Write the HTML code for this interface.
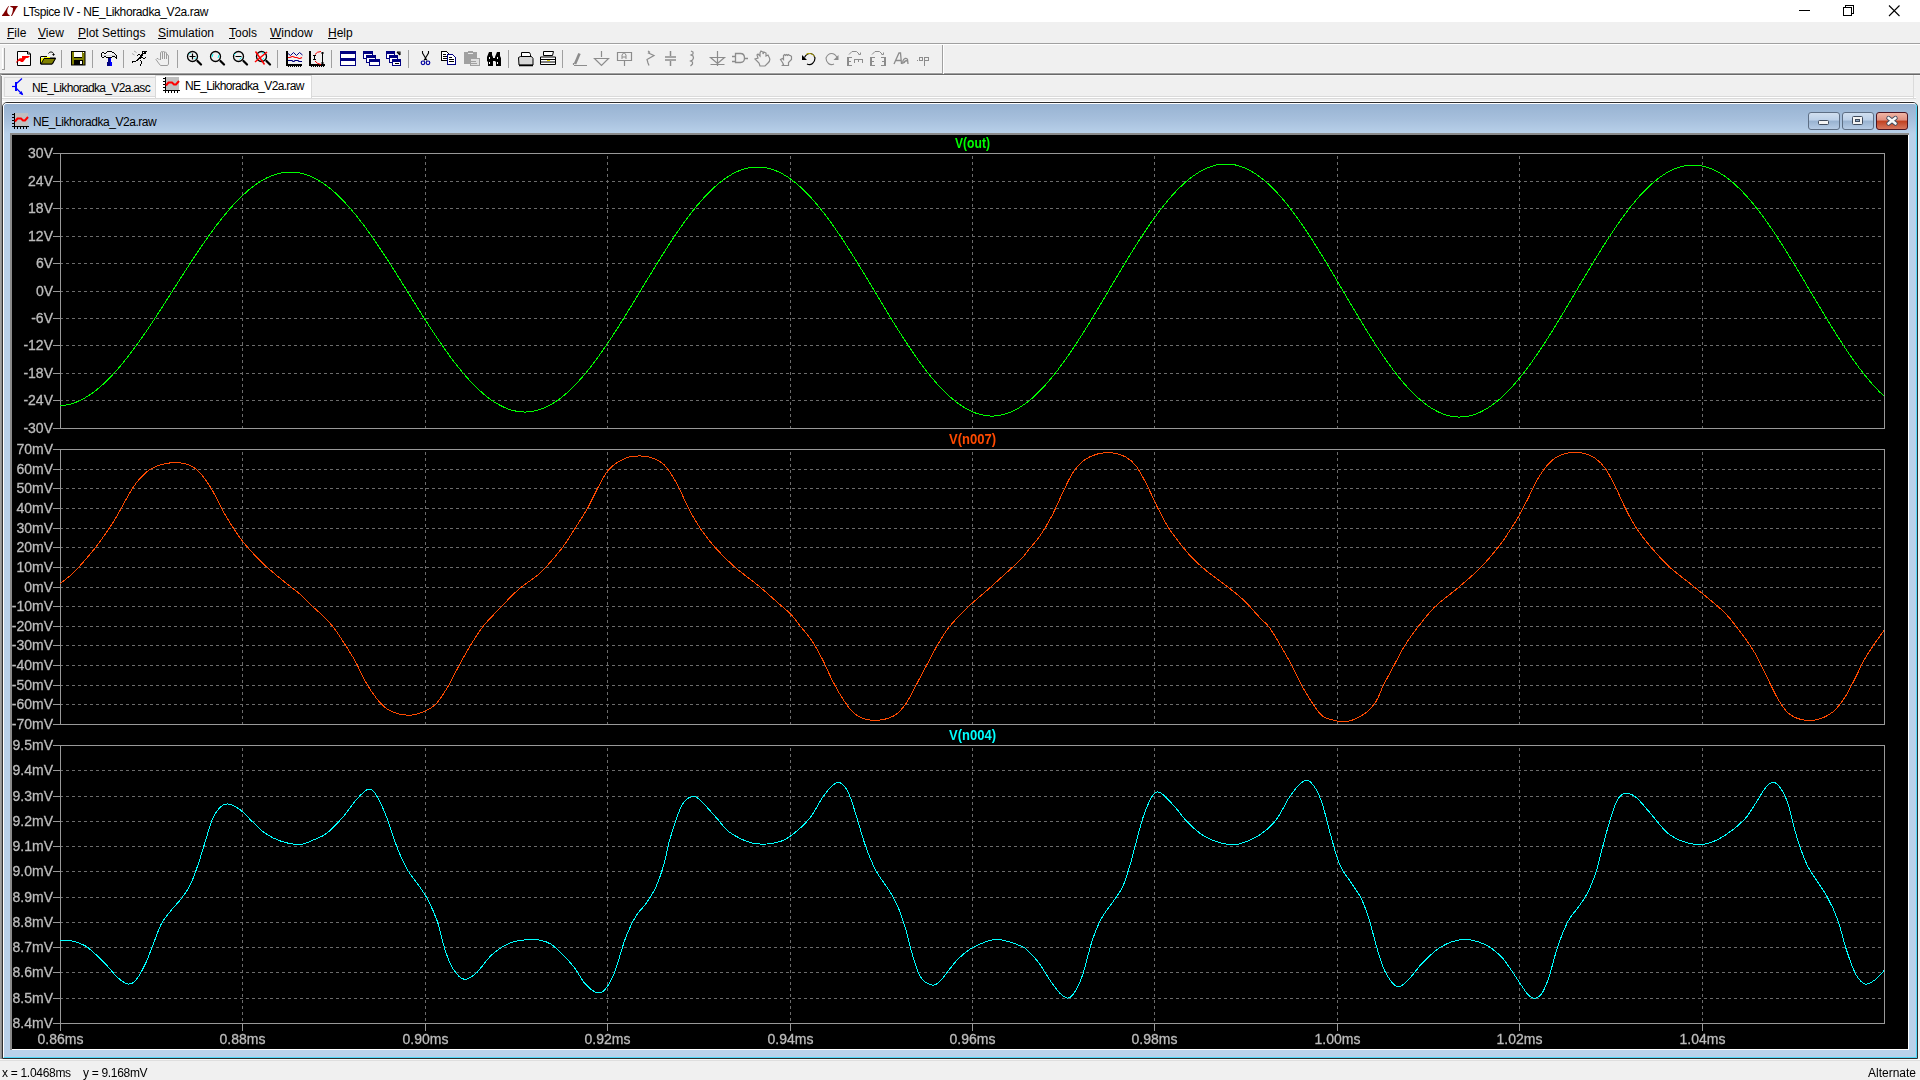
<!DOCTYPE html>
<html><head><meta charset="utf-8">
<style>
*{margin:0;padding:0;box-sizing:border-box}
html,body{width:1920px;height:1080px;overflow:hidden;background:#f0f0f0;font-family:"Liberation Sans",sans-serif;position:relative}
.abs{position:absolute}
.txt{position:absolute;white-space:nowrap;font-size:12px;color:#000;line-height:14px}
#menu u{text-decoration:underline;text-decoration-thickness:1px;text-underline-offset:1px}
</style></head>
<body>
<!-- title bar -->
<div class="abs" style="left:0;top:0;width:1920px;height:22px;background:#fff"></div>
<svg class="abs" style="left:0;top:0" width="24" height="22" viewBox="0 0 24 22">
  <path d="M8.5 6C7 7.5 4.5 12.5 2 15.3V16h7.8l-.4-1C8 14.5 7 13 7.2 11 7.4 9 8.3 7.3 9 6.5z" fill="#800000"/><path d="M10.3 6H18l-.6 1C16 8 14.5 12 12 16h-1c1-2 2-5 2-8-.5-.5-2.5-1-2.7-1.5z" fill="#800000"/>
</svg>
<div class="txt" style="left:23px;top:4.6px;letter-spacing:-0.38px">LTspice IV - NE_Likhoradka_V2a.raw</div>
<svg class="abs" style="left:1780px;top:0" width="140" height="22" viewBox="0 0 140 22" shape-rendering="crispEdges">
  <rect x="19" y="10" width="11" height="1" fill="#000"/>
  <rect x="63.5" y="7.5" width="8" height="8" fill="none" stroke="#000"/>
  <path d="M65.5 7.5v-2h8v8h-2" fill="none" stroke="#000"/>
  <path d="M109 5.5l10.5 10.5M119.5 5.5L109 16" stroke="#000" stroke-width="1.1" shape-rendering="auto"/>
</svg>
<!-- menu -->
<div id="menu">
  <div class="txt" style="left:7px;top:26px"><u>F</u>ile</div>
  <div class="txt" style="left:38px;top:26px"><u>V</u>iew</div>
  <div class="txt" style="left:78px;top:26px"><u>P</u>lot Settings</div>
  <div class="txt" style="left:158px;top:26px"><u>S</u>imulation</div>
  <div class="txt" style="left:229px;top:26px"><u>T</u>ools</div>
  <div class="txt" style="left:270px;top:26px"><u>W</u>indow</div>
  <div class="txt" style="left:328px;top:26px"><u>H</u>elp</div>
</div>
<div class="abs" style="left:0;top:43px;width:1920px;height:1px;background:#a0a0a0"></div>
<div class="abs" style="left:0;top:44px;width:1920px;height:1px;background:#fff"></div>
<div class="abs" style="left:0;top:72px;width:1920px;height:1px;background:#f6f6f6"></div><div class="abs" style="left:0;top:73px;width:1920px;height:1px;background:#a0a0a0"></div><div class="abs" style="left:0;top:74px;width:1920px;height:1px;background:#696969"></div>
<svg class="abs" style="left:0;top:0" width="960" height="80" viewBox="0 0 960 80">
<g shape-rendering="crispEdges">
<!-- toolbar band borders -->
<rect x="942" y="45" width="1" height="29" fill="#a0a0a0"/><rect x="943" y="45" width="1" height="29" fill="#fff"/>
<!-- grip -->
<rect x="2" y="48" width="1" height="21" fill="#fff"/><rect x="4" y="48" width="1" height="22" fill="#a0a0a0"/><rect x="2" y="69" width="3" height="1" fill="#a0a0a0"/>
<!-- separators -->
<g fill="#a0a0a0">
<rect x="61" y="50" width="1" height="18"/><rect x="92" y="50" width="1" height="18"/><rect x="123" y="50" width="1" height="18"/>
<rect x="177" y="50" width="1" height="18"/><rect x="277" y="50" width="1" height="18"/><rect x="331" y="50" width="1" height="18"/>
<rect x="408" y="50" width="1" height="18"/><rect x="508" y="50" width="1" height="18"/><rect x="562" y="50" width="1" height="18"/>
</g>
</g>
<!-- new doc -->
<path d="M18 52h11l1 2v11H18z" fill="#fff"/>
<path d="M17.5 51.5h10.5l2.5 2.5v11.5h-13z" fill="none" stroke="#000"/>
<path d="M27.5 51.5v2.5h3" fill="none" stroke="#000"/>
<path d="M22 56h8l-2 2h-2l-3 4h-3l1-1h-3l-2 2v-1l3-3h3l1-1h-1z" fill="#f00"/>
<path d="M18 61l2-2h2l1-1" stroke="#f00" stroke-width="1.5" fill="none"/>
<!-- open folder -->
<path d="M40.5 56.5v7.5h12l3-6H44" fill="none" stroke="#000"/>
<path d="M41 57h3v1h6v-1h-9z" fill="#ff0"/>
<path d="M41 56.5h6" stroke="#000"/>
<path d="M41 58h9l-1 1h-5l-3 4z" fill="#ff0"/>
<path d="M44 58.5h11.5l-3.5 5.5H41z" fill="#808000" stroke="#000"/>
<path d="M48.5 53.5c1-2 4-2 5 0v1.5" fill="none" stroke="#000"/>
<path d="M52 54h3l-1.5 2z" fill="#000"/>
<!-- floppy -->
<rect x="71.5" y="51.5" width="13.5" height="13.5" fill="#808000" stroke="#000"/>
<rect x="74" y="52" width="8" height="5" fill="#fff"/><rect x="74" y="57" width="8" height="1" fill="#000"/>
<rect x="74" y="60" width="9" height="5" fill="#000"/><rect x="80" y="61" width="2" height="3" fill="#fff"/>
<rect x="83" y="52" width="1" height="1" fill="#fff"/>
<!-- hammer -->
<g shape-rendering="crispEdges">
<path d="M102 53h2v1h2v-2h6v1h2v1h1v1h1v1h-4v1h-6v-1h-2v1h-2z" fill="#f4f4f4"/>
<rect x="102" y="55" width="14" height="1" fill="#d8d8d8"/>
<g fill="#000">
<rect x="107" y="51" width="5" height="1"/><rect x="102" y="52" width="2" height="1"/><rect x="106" y="52" width="1" height="1"/><rect x="112" y="52" width="2" height="1"/>
<rect x="101" y="53" width="1" height="4"/><rect x="104" y="53" width="2" height="1"/><rect x="114" y="53" width="1" height="1"/><rect x="115" y="54" width="1" height="1"/>
<rect x="116" y="55" width="1" height="4"/><rect x="104" y="56" width="2" height="1"/><rect x="112" y="56" width="3" height="1"/><rect x="115" y="57" width="1" height="1"/>
<rect x="102" y="57" width="2" height="1"/><rect x="106" y="57" width="6" height="1"/>
</g>
<rect x="108" y="58" width="2" height="4" fill="#000080"/><rect x="110" y="58" width="1" height="4" fill="#0000ff"/>
<rect x="107" y="62" width="3" height="4" fill="#000080"/><rect x="110" y="62" width="2" height="4" fill="#0000ff"/>
</g>
<!-- runner -->
<g shape-rendering="crispEdges" fill="#000">
<rect x="142" y="51" width="5" height="1"/><rect x="142" y="52" width="4" height="2"/><rect x="141" y="54" width="2" height="2"/><rect x="140" y="56" width="2" height="1"/>
<rect x="139" y="57" width="3" height="1"/><rect x="138" y="58" width="3" height="1"/><rect x="137" y="59" width="2" height="1"/><rect x="136" y="60" width="2" height="1"/><rect x="135" y="61" width="1" height="1"/>
<rect x="132" y="61" width="3" height="1"/><rect x="132" y="62" width="1" height="1"/>
<rect x="138" y="54" width="2" height="1"/><rect x="137" y="55" width="1" height="1"/><rect x="140" y="55" width="1" height="1"/>
<rect x="142" y="57" width="1" height="1"/><rect x="143" y="58" width="2" height="1"/><rect x="145" y="57" width="1" height="1"/>
<rect x="140" y="60" width="1" height="1"/><rect x="141" y="61" width="1" height="3"/><rect x="140" y="64" width="1" height="2"/>
</g>
<rect x="143" y="52" width="1" height="1" fill="#fff" shape-rendering="crispEdges"/>
<path d="M134 51l2.5 1.5M132 53.5l2.5 1.5" stroke="#a8a8a8"/>
<!-- hand gray -->
<path d="M160.5 60v-7l1-1.5 1 .5v6.5M162.5 59v-7l1-1 1 1v7M164.5 59v-6.5l1-.5 1 1v6M166.5 59v-5l1.5 1 .5 1v8l-1 1.5h-7l-2-2.5-2.5-3.5 1-1h1l1.5 1.5" fill="none" stroke="#9c9c9c"/>
<!-- zoom icons -->
<g fill="none" stroke="#000" stroke-width="1.3">
<circle cx="192.5" cy="56.5" r="5"/><circle cx="215.5" cy="56.5" r="5"/><circle cx="238.5" cy="56.5" r="5"/><circle cx="261.5" cy="56.5" r="5"/>
</g>
<g stroke="#000" stroke-width="2.2" stroke-linecap="round">
<path d="M197.5 61l3.5 3.5M220.5 61l3.5 3.5M243.5 61l3.5 3.5M266.5 61l3.5 3.5"/>
</g>
<path d="M189.5 56.5h6M192.5 53.5v6M235.5 56.5h6" stroke="#000" stroke-width="1.2"/>
<path d="M189 54.5l1.5-1.5M194.5 59l1.5-1.5M212 57l1-3M218 58l1-3M234 55l1.5-1.5M239.5 59.5l2-2M262 53l2 0M262 60l2-2" stroke="#00ffff"/>
<path d="M255.5 51.5l9 13M255 62l12-10" stroke="#f00" stroke-width="1.5"/>
<!-- plot icons -->
<g shape-rendering="crispEdges">
<path d="M287 51v14h15" fill="none" stroke="#000" stroke-width="1.5"/>
<path d="M286 53h1M286 55h1M286 57h1M286 59h1M286 61h1M286 63h1M288 66v1M290 66v1M292 66v1M294 66v1M296 66v1M298 66v1M300 66v1" stroke="#000"/>
<path d="M310 51v14h15" fill="none" stroke="#000" stroke-width="1.5"/>
<path d="M309 53h1M309 55h1M309 57h1M309 59h1M309 61h1M309 63h1M311 66v1M313 66v1M315 66v1M317 66v1M319 66v1M321 66v1M323 66v1" stroke="#000"/>
</g>
<path d="M288 53.5l2.5 2 3-3 3 3 3-3 3 2.5" fill="none" stroke="#000080"/>
<path d="M288 57.5h2l2-1h1l2 1h2l2 1h1l2-1" fill="none" stroke="#f00" stroke-width="1.2"/>
<path d="M288 60.5h4l1 1h1l1-1h3l1 1h3" fill="none" stroke="#000080" stroke-width="1.2"/>
<path d="M321 51.5q-4 0-6 3M315 61q2 3 6 3.5" fill="none" stroke="#f00"/>
<path d="M314.5 55v5M322.5 52v12" stroke="#000"/>
<path d="M313 55.5h3M313 59.5h3M321 53h3M321 63h3" stroke="#000"/>
<!-- tile/cascade/arrange -->
<g shape-rendering="crispEdges">
<rect x="340.5" y="51.5" width="15" height="7" fill="#fff" stroke="#000080"/><rect x="341" y="52" width="14" height="2" fill="#000080"/>
<rect x="340.5" y="58.5" width="15" height="7" fill="#fff" stroke="#000080"/><rect x="341" y="59" width="14" height="2" fill="#000080"/>
<rect x="363.5" y="51.5" width="9" height="7" fill="#fff" stroke="#000080"/><rect x="364" y="52" width="8" height="2" fill="#000080"/>
<rect x="366.5" y="55.5" width="9" height="7" fill="#fff" stroke="#000080"/><rect x="367" y="56" width="8" height="2" fill="#000080"/>
<rect x="369.5" y="59.5" width="10" height="6" fill="#fff" stroke="#000080"/><rect x="370" y="60" width="9" height="2" fill="#000080"/>
<rect x="386.5" y="51.5" width="8" height="7" fill="#fff" stroke="#000080"/><rect x="387" y="52" width="7" height="2" fill="#000080"/>
<rect x="389.5" y="55.5" width="8" height="7" fill="#fff" stroke="#000080"/><rect x="390" y="56" width="7" height="2" fill="#000080"/>
<rect x="392.5" y="59.5" width="8" height="6" fill="#fff" stroke="#000080"/><rect x="393" y="60" width="7" height="2" fill="#000080"/>
<rect x="395" y="63" width="4" height="1" fill="#000"/>
</g>
<path d="M397 52h3v3M397 52l3 3" fill="none" stroke="#000" stroke-width="1.1"/>
<!-- scissors -->
<path d="M422.5 51v2l3 5M428.5 51v2l-3 5M425.5 58l-1.5 2.5M425.5 58l1.5 2.5" fill="none" stroke="#000" stroke-width="1.1"/>
<circle cx="423" cy="62.8" r="1.8" fill="none" stroke="#0000a0" stroke-width="1.2"/><circle cx="428" cy="62.8" r="1.8" fill="none" stroke="#0000a0" stroke-width="1.2"/>
<!-- copy -->
<g shape-rendering="crispEdges">
<path d="M441.5 51.5h5l2 2v6.5h-7z" fill="#fff" stroke="#000"/>
<path d="M443 54h3M443 56h4M443 58h4" stroke="#000"/>
<path d="M447.5 54.5h5l3 3v6.5h-8z" fill="#fff" stroke="#000080"/>
<path d="M449 57h3M449 59h5M449 61h5" stroke="#000"/>
<!-- paste gray -->
<rect x="464" y="52" width="13" height="12" rx="1" fill="#a0a0a0"/>
<rect x="468" y="51" width="5" height="2" fill="#a0a0a0"/><rect x="468" y="53" width="5" height="1" fill="#e8e8e8"/>
<rect x="470" y="58" width="9" height="7" fill="#e0e0e0" stroke="#a0a0a0"/>
<path d="M471 61h5M471 63h6" stroke="#a0a0a0"/>
</g>
<!-- binoculars -->
<path d="M489 52h3v3l1 2v9h-5v-4l-1-1v-4zM497 52h3v4l1 2v8h-5v-4l-1-1v-4z" fill="#000"/>
<path d="M492 58h5v3h-5z" fill="#000"/>
<path d="M489 57h1v2h-1zM497 57h1v2h-1zM489 62h1v2h-1zM497 62h1v2h-1z" fill="#fff"/>
<!-- printers -->
<path d="M521.5 52.5h8l1 2v2h-9z" fill="#fff" stroke="#000"/>
<path d="M518.5 57.5l2-1h11l1.5 2v6.5h-14z" fill="#d8d8d8" stroke="#000"/>
<path d="M519 65.5h14" stroke="#000" stroke-width="1.5"/>
<path d="M543.5 51.5h10l-1 4h-9z" fill="#fff" stroke="#000"/>
<path d="M540.5 57h15v7.5h-15z" fill="#fff" stroke="#000"/>
<path d="M541 59.5h14M541 62h14" stroke="#000"/>
<path d="M547 60.5h3" stroke="#e0d000"/>
<!-- gray schematic icons -->
<g fill="none" stroke="#8c8c8c" stroke-width="1.2">
<path d="M575 64l4.5-10.5" stroke-width="2.6"/><path d="M574 65.5h13" stroke-width="1"/><path d="M573.5 65v-2"/>
<path d="M601.5 51v6M594.5 58.5h14l-7 7z"/>
<path d="M617.5 52.5h14v8h-14zM624.5 61v5"/><path d="M622 59v-4l1.5-2h1l1.5 2v4M622 57h4" stroke-width="1"/>
<path d="M648 51l1.5 1-1 1 5.5 2.5-7 4 1 3.5 1 2.5"/>
<path d="M670.5 51v5M665 57h11M665 60h11M670.5 61v5" stroke-width="1.5"/>
<path d="M691 51l2 1v2l-2 1 2 1 .5 2-1 2-2 1 2 1v2l-2 2"/>
<path d="M717.5 51v15M710.5 57.5h14l-7 6zM710.5 64.5h14"/>
<path d="M732 56.5h3M732 61.5h3M735.5 53.5h5q4 0 4 4.5t-4 4.5h-5zM745 58.5h3" stroke-width="1.3"/>
<path d="M760 66h5l3-3q3-3 1-6l-1-2-2 1v-3l-2-1-1 2v-2l-2-1-1 2v3l-2-2-1 1 1 3-3 1 4 4z"/>
<path d="M782.5 65.5h6v-3l3-3v-3l-1-1h-1l-1-1-1 1-1-1-1 1-1-1-1 1v4l-1-1-2 1 2 3 1 2z"/>
</g>
<path d="M804.5 57.5q2-4 5.5-4t5 4.5q0 3.5-2.5 5.5t-5.5 .5" fill="none" stroke="#000" stroke-width="1.2"/>
<path d="M806 54.5q2-1.5 4.5-1t4 3" fill="none" stroke="#b8a800" stroke-width="1"/>
<path d="M802 55v5h5z" fill="#000"/>
<g fill="none" stroke="#8c8c8c" stroke-width="1.1">
<path d="M837 57.5q-2-4-5.5-4t-5.5 4.5q0 3.5 2.5 5.5t5.5 .5"/>
</g>
<path d="M838.5 55v5h-5z" fill="#8c8c8c"/>
<g shape-rendering="crispEdges" fill="#8c8c8c">
<rect x="847" y="57" width="2" height="9"/><rect x="847" y="57" width="5" height="1"/><rect x="847" y="61" width="4" height="1"/><rect x="847" y="65" width="5" height="1"/>
<rect x="854" y="59" width="9" height="1"/><rect x="854" y="59" width="1" height="4"/><rect x="858" y="59" width="1" height="3"/><rect x="862" y="59" width="1" height="4"/>
<rect x="870" y="57" width="2" height="9"/><rect x="870" y="57" width="5" height="1"/><rect x="870" y="61" width="4" height="1"/><rect x="870" y="65" width="5" height="1"/>
<rect x="884" y="57" width="2" height="9"/><rect x="881" y="57" width="5" height="1"/><rect x="882" y="61" width="4" height="1"/><rect x="881" y="65" width="5" height="1"/>
</g>
<g fill="none" stroke="#8c8c8c" stroke-width="1">
<path d="M849 54.5l3-3h4.5l3.5 3.5M858.5 54.5h2v-2"/>
<path d="M872 54.5l3-3h4.5l3.5 3.5M881.5 54.5h2v-2"/>
</g>
<path d="M894 64l5-11h1.5l1 11M896 60.5h5M903 64q-1-4 2-5.5 2-.5 2.5 1l.5 4.5M907.5 60.5q-3 0-3.5 2.5" fill="none" stroke="#8c8c8c" stroke-width="1.3"/>
<g fill="#8c8c8c">
<rect x="917" y="60" width="1" height="1"/>
<path d="M919 57h4v4h-4zM920 58v2h2v-2z" fill-rule="evenodd"/>
<path d="M924 57h5v4h-4v5h-1zM925 58v2h3v-2z" fill-rule="evenodd"/>
</g>
</svg>

<!-- MDI client edge -->
<div class="abs" style="left:0;top:73px;width:1px;height:987px;background:#a0a0a0"></div>
<div class="abs" style="left:1px;top:74px;width:1px;height:985px;background:#8c8c8c"></div>
<div class="abs" style="left:2px;top:75px;width:1px;height:30px;background:#f8f8f8"></div>
<div class="abs" style="left:1px;top:75px;width:1919px;height:1px;background:#f8f8f8"></div>
<!-- tabs -->
<div class="abs" style="left:4px;top:77px;width:152px;height:20px;background:#f0f0f0;border:1px solid #dadada;border-right:none"></div>
<div class="abs" style="left:312px;top:96px;width:1602px;height:1px;background:#dadada"></div><div class="abs" style="left:2px;top:97px;width:1914px;height:1px;background:#fff"></div><div class="abs" style="left:2px;top:98px;width:1914px;height:1px;background:#dadada"></div><div class="abs" style="left:2px;top:101px;width:1914px;height:1px;background:#fff"></div>
<div class="abs" style="left:1913px;top:75px;width:1px;height:23px;background:#dadada"></div>
<div class="abs" style="left:155px;top:75px;width:157px;height:23px;background:#fff;border:1px solid #d9d9d9;border-bottom:none"></div>
<svg class="abs" style="left:10px;top:76px" width="20" height="22" viewBox="10 76 20 22">
  <rect x="15" y="82" width="2" height="9" fill="#0000ff"/>
  <path d="M12 86.5h3" stroke="#0000ff" stroke-width="1.2"/>
  <path d="M16.5 83.5l5.5-5M16.5 88.5l6 6" stroke="#0000ff" stroke-width="1.2" fill="none"/>
  <path d="M23.2 95.2l-4.2-1.6 2.6-2.6z" fill="#0000ff"/>
</svg>
<div class="txt" style="left:32px;top:81px;letter-spacing:-0.67px">NE_Likhoradka_V2a.asc</div>
<svg class="abs" style="left:161px;top:74px" width="22" height="22" viewBox="10 110 22 22" shape-rendering="crispEdges">
  <rect x="15" y="113" width="13" height="13" fill="#c0c0c0"/>
  <rect x="14" y="113" width="1" height="16" fill="#000"/><rect x="12" y="126" width="17" height="1" fill="#000"/>
  <path d="M12 114.5h2M12 117.5h2M12 120.5h2M12 123.5h2M14.5 127v2M17.5 127v2M20.5 127v2M23.5 127v2M26.5 127v2" stroke="#000"/>
  <path d="M15 121.5l2.5-3h3.5l2 2h2l3-3.5" fill="none" stroke="#f00" stroke-width="2" shape-rendering="auto"/>
</svg>
<div class="txt" style="left:185px;top:79px;letter-spacing:-0.67px">NE_Likhoradka_V2a.raw</div>
<!-- child window -->
<div class="abs" style="left:2px;top:102px;width:1916px;height:957px;background:#b9d1ea;border:1px solid #2e2e2e;border-radius:5px 5px 0 0"></div>
<div class="abs" style="left:3px;top:103px;width:1914px;height:955px;border-left:1px solid #fff;border-top:1px solid #fff;border-right:1px solid #4fd8f8;border-bottom:1px solid #4fd8f8;border-radius:4px 4px 0 0"></div>
<div class="abs" style="left:4px;top:104px;width:1912px;height:30px;background:linear-gradient(#98b3d2,#a6bfdc 50%,#b9d1ea);border-radius:3px 3px 0 0"></div>
<div class="abs" style="left:10px;top:133px;width:1899px;height:917px;background:#fff;border-top:2px solid #8a8a8a;border-left:2px solid #8a8a8a"></div>
<svg class="abs" style="left:10px;top:110px" width="22" height="22" viewBox="10 110 22 22" shape-rendering="crispEdges">
  <rect x="15" y="113" width="13" height="13" fill="#c0c0c0"/>
  <rect x="14" y="113" width="1" height="16" fill="#000"/><rect x="12" y="126" width="17" height="1" fill="#000"/>
  <path d="M12 114.5h2M12 117.5h2M12 120.5h2M12 123.5h2M14.5 127v2M17.5 127v2M20.5 127v2M23.5 127v2M26.5 127v2" stroke="#000"/>
  <path d="M15 121.5l2.5-3h3.5l2 2h2l3-3.5" fill="none" stroke="#f00" stroke-width="2" shape-rendering="auto"/>
</svg>
<div class="txt" style="left:33px;top:115px;letter-spacing:-0.45px">NE_Likhoradka_V2a.raw</div>
<svg class="abs" style="left:1800px;top:104px" width="116" height="30" viewBox="1800 104 116 30">
  <defs>
    <linearGradient id="gb" x1="0" y1="0" x2="0" y2="1">
      <stop offset="0" stop-color="#d2e0f0"/><stop offset="0.45" stop-color="#bcd0e8"/><stop offset="0.5" stop-color="#98b2d0"/><stop offset="1" stop-color="#b8cde6"/>
    </linearGradient>
    <linearGradient id="gr" x1="0" y1="0" x2="0" y2="1">
      <stop offset="0" stop-color="#f0b8a8"/><stop offset="0.45" stop-color="#e09080"/><stop offset="0.5" stop-color="#c0401f"/><stop offset="1" stop-color="#d87a62"/>
    </linearGradient>
  </defs>
  <rect x="1808.5" y="112.5" width="31" height="17" rx="2.5" fill="url(#gb)" stroke="#5d6e84"/>
  <rect x="1842.5" y="112.5" width="31" height="17" rx="2.5" fill="url(#gb)" stroke="#5d6e84"/>
  <rect x="1876.5" y="112.5" width="31" height="17" rx="2.5" fill="url(#gr)" stroke="#4a1420"/>
  <rect x="1818.5" y="120.5" width="10" height="4" rx="1" fill="#f4f4f4" stroke="#3e4a5c"/>
  <rect x="1852.5" y="116.5" width="10" height="8" rx="1" fill="#f4f4f4" stroke="#3e4a5c"/>
  <rect x="1855.5" y="119.5" width="4" height="2" fill="#8fa6c0" stroke="#3e4a5c"/>
  <path d="M1888.5 118l7 5.5M1895.5 118l-7 5.5" stroke="#3e4a5c" stroke-width="4.4" stroke-linecap="round"/>
  <path d="M1888.5 118l7 5.5M1895.5 118l-7 5.5" stroke="#f8f8f8" stroke-width="2.6" stroke-linecap="round"/>
</svg>
<svg class="abs" style="left:0;top:0;will-change:transform" width="1920" height="1080" viewBox="0 0 1920 1080">
<rect x="12" y="135" width="1896" height="914" fill="#000"/>
<g shape-rendering="crispEdges"><line x1="60" y1="181.5" x2="1884" y2="181.5" stroke="#6c6c6c" stroke-dasharray="3 3"/><line x1="60" y1="208.5" x2="1884" y2="208.5" stroke="#6c6c6c" stroke-dasharray="3 3"/><line x1="60" y1="236.5" x2="1884" y2="236.5" stroke="#6c6c6c" stroke-dasharray="3 3"/><line x1="60" y1="263.5" x2="1884" y2="263.5" stroke="#6c6c6c" stroke-dasharray="3 3"/><line x1="60" y1="291.5" x2="1884" y2="291.5" stroke="#6c6c6c" stroke-dasharray="3 3"/><line x1="60" y1="318.5" x2="1884" y2="318.5" stroke="#6c6c6c" stroke-dasharray="3 3"/><line x1="60" y1="345.5" x2="1884" y2="345.5" stroke="#6c6c6c" stroke-dasharray="3 3"/><line x1="60" y1="373.5" x2="1884" y2="373.5" stroke="#6c6c6c" stroke-dasharray="3 3"/><line x1="60" y1="400.5" x2="1884" y2="400.5" stroke="#6c6c6c" stroke-dasharray="3 3"/><line x1="242.5" y1="156" x2="242.5" y2="428" stroke="#6c6c6c" stroke-dasharray="3 3"/><line x1="425.5" y1="156" x2="425.5" y2="428" stroke="#6c6c6c" stroke-dasharray="3 3"/><line x1="607.5" y1="156" x2="607.5" y2="428" stroke="#6c6c6c" stroke-dasharray="3 3"/><line x1="790.5" y1="156" x2="790.5" y2="428" stroke="#6c6c6c" stroke-dasharray="3 3"/><line x1="972.5" y1="156" x2="972.5" y2="428" stroke="#6c6c6c" stroke-dasharray="3 3"/><line x1="1154.5" y1="156" x2="1154.5" y2="428" stroke="#6c6c6c" stroke-dasharray="3 3"/><line x1="1337.5" y1="156" x2="1337.5" y2="428" stroke="#6c6c6c" stroke-dasharray="3 3"/><line x1="1519.5" y1="156" x2="1519.5" y2="428" stroke="#6c6c6c" stroke-dasharray="3 3"/><line x1="1702.5" y1="156" x2="1702.5" y2="428" stroke="#6c6c6c" stroke-dasharray="3 3"/><rect x="60.5" y="153.5" width="1824" height="275" fill="none" stroke="#999999"/><line x1="53" y1="153.5" x2="60" y2="153.5" stroke="#999999"/><line x1="53" y1="181.5" x2="60" y2="181.5" stroke="#999999"/><line x1="53" y1="208.5" x2="60" y2="208.5" stroke="#999999"/><line x1="53" y1="236.5" x2="60" y2="236.5" stroke="#999999"/><line x1="53" y1="263.5" x2="60" y2="263.5" stroke="#999999"/><line x1="53" y1="291.5" x2="60" y2="291.5" stroke="#999999"/><line x1="53" y1="318.5" x2="60" y2="318.5" stroke="#999999"/><line x1="53" y1="345.5" x2="60" y2="345.5" stroke="#999999"/><line x1="53" y1="373.5" x2="60" y2="373.5" stroke="#999999"/><line x1="53" y1="400.5" x2="60" y2="400.5" stroke="#999999"/><line x1="53" y1="428.5" x2="60" y2="428.5" stroke="#999999"/><line x1="60" y1="469.5" x2="1884" y2="469.5" stroke="#6c6c6c" stroke-dasharray="3 3"/><line x1="60" y1="488.5" x2="1884" y2="488.5" stroke="#6c6c6c" stroke-dasharray="3 3"/><line x1="60" y1="508.5" x2="1884" y2="508.5" stroke="#6c6c6c" stroke-dasharray="3 3"/><line x1="60" y1="528.5" x2="1884" y2="528.5" stroke="#6c6c6c" stroke-dasharray="3 3"/><line x1="60" y1="547.5" x2="1884" y2="547.5" stroke="#6c6c6c" stroke-dasharray="3 3"/><line x1="60" y1="567.5" x2="1884" y2="567.5" stroke="#6c6c6c" stroke-dasharray="3 3"/><line x1="60" y1="587.5" x2="1884" y2="587.5" stroke="#6c6c6c" stroke-dasharray="3 3"/><line x1="60" y1="606.5" x2="1884" y2="606.5" stroke="#6c6c6c" stroke-dasharray="3 3"/><line x1="60" y1="626.5" x2="1884" y2="626.5" stroke="#6c6c6c" stroke-dasharray="3 3"/><line x1="60" y1="645.5" x2="1884" y2="645.5" stroke="#6c6c6c" stroke-dasharray="3 3"/><line x1="60" y1="665.5" x2="1884" y2="665.5" stroke="#6c6c6c" stroke-dasharray="3 3"/><line x1="60" y1="685.5" x2="1884" y2="685.5" stroke="#6c6c6c" stroke-dasharray="3 3"/><line x1="60" y1="704.5" x2="1884" y2="704.5" stroke="#6c6c6c" stroke-dasharray="3 3"/><line x1="242.5" y1="452" x2="242.5" y2="724" stroke="#6c6c6c" stroke-dasharray="3 3"/><line x1="425.5" y1="452" x2="425.5" y2="724" stroke="#6c6c6c" stroke-dasharray="3 3"/><line x1="607.5" y1="452" x2="607.5" y2="724" stroke="#6c6c6c" stroke-dasharray="3 3"/><line x1="790.5" y1="452" x2="790.5" y2="724" stroke="#6c6c6c" stroke-dasharray="3 3"/><line x1="972.5" y1="452" x2="972.5" y2="724" stroke="#6c6c6c" stroke-dasharray="3 3"/><line x1="1154.5" y1="452" x2="1154.5" y2="724" stroke="#6c6c6c" stroke-dasharray="3 3"/><line x1="1337.5" y1="452" x2="1337.5" y2="724" stroke="#6c6c6c" stroke-dasharray="3 3"/><line x1="1519.5" y1="452" x2="1519.5" y2="724" stroke="#6c6c6c" stroke-dasharray="3 3"/><line x1="1702.5" y1="452" x2="1702.5" y2="724" stroke="#6c6c6c" stroke-dasharray="3 3"/><rect x="60.5" y="449.5" width="1824" height="275" fill="none" stroke="#999999"/><line x1="53" y1="449.5" x2="60" y2="449.5" stroke="#999999"/><line x1="53" y1="469.5" x2="60" y2="469.5" stroke="#999999"/><line x1="53" y1="488.5" x2="60" y2="488.5" stroke="#999999"/><line x1="53" y1="508.5" x2="60" y2="508.5" stroke="#999999"/><line x1="53" y1="528.5" x2="60" y2="528.5" stroke="#999999"/><line x1="53" y1="547.5" x2="60" y2="547.5" stroke="#999999"/><line x1="53" y1="567.5" x2="60" y2="567.5" stroke="#999999"/><line x1="53" y1="587.5" x2="60" y2="587.5" stroke="#999999"/><line x1="53" y1="606.5" x2="60" y2="606.5" stroke="#999999"/><line x1="53" y1="626.5" x2="60" y2="626.5" stroke="#999999"/><line x1="53" y1="645.5" x2="60" y2="645.5" stroke="#999999"/><line x1="53" y1="665.5" x2="60" y2="665.5" stroke="#999999"/><line x1="53" y1="685.5" x2="60" y2="685.5" stroke="#999999"/><line x1="53" y1="704.5" x2="60" y2="704.5" stroke="#999999"/><line x1="53" y1="724.5" x2="60" y2="724.5" stroke="#999999"/><line x1="60" y1="770.5" x2="1884" y2="770.5" stroke="#6c6c6c" stroke-dasharray="3 3"/><line x1="60" y1="796.5" x2="1884" y2="796.5" stroke="#6c6c6c" stroke-dasharray="3 3"/><line x1="60" y1="821.5" x2="1884" y2="821.5" stroke="#6c6c6c" stroke-dasharray="3 3"/><line x1="60" y1="846.5" x2="1884" y2="846.5" stroke="#6c6c6c" stroke-dasharray="3 3"/><line x1="60" y1="871.5" x2="1884" y2="871.5" stroke="#6c6c6c" stroke-dasharray="3 3"/><line x1="60" y1="897.5" x2="1884" y2="897.5" stroke="#6c6c6c" stroke-dasharray="3 3"/><line x1="60" y1="922.5" x2="1884" y2="922.5" stroke="#6c6c6c" stroke-dasharray="3 3"/><line x1="60" y1="947.5" x2="1884" y2="947.5" stroke="#6c6c6c" stroke-dasharray="3 3"/><line x1="60" y1="972.5" x2="1884" y2="972.5" stroke="#6c6c6c" stroke-dasharray="3 3"/><line x1="60" y1="998.5" x2="1884" y2="998.5" stroke="#6c6c6c" stroke-dasharray="3 3"/><line x1="242.5" y1="748" x2="242.5" y2="1023" stroke="#6c6c6c" stroke-dasharray="3 3"/><line x1="425.5" y1="748" x2="425.5" y2="1023" stroke="#6c6c6c" stroke-dasharray="3 3"/><line x1="607.5" y1="748" x2="607.5" y2="1023" stroke="#6c6c6c" stroke-dasharray="3 3"/><line x1="790.5" y1="748" x2="790.5" y2="1023" stroke="#6c6c6c" stroke-dasharray="3 3"/><line x1="972.5" y1="748" x2="972.5" y2="1023" stroke="#6c6c6c" stroke-dasharray="3 3"/><line x1="1154.5" y1="748" x2="1154.5" y2="1023" stroke="#6c6c6c" stroke-dasharray="3 3"/><line x1="1337.5" y1="748" x2="1337.5" y2="1023" stroke="#6c6c6c" stroke-dasharray="3 3"/><line x1="1519.5" y1="748" x2="1519.5" y2="1023" stroke="#6c6c6c" stroke-dasharray="3 3"/><line x1="1702.5" y1="748" x2="1702.5" y2="1023" stroke="#6c6c6c" stroke-dasharray="3 3"/><rect x="60.5" y="745.5" width="1824" height="278" fill="none" stroke="#999999"/><line x1="53" y1="745.5" x2="60" y2="745.5" stroke="#999999"/><line x1="53" y1="770.5" x2="60" y2="770.5" stroke="#999999"/><line x1="53" y1="796.5" x2="60" y2="796.5" stroke="#999999"/><line x1="53" y1="821.5" x2="60" y2="821.5" stroke="#999999"/><line x1="53" y1="846.5" x2="60" y2="846.5" stroke="#999999"/><line x1="53" y1="871.5" x2="60" y2="871.5" stroke="#999999"/><line x1="53" y1="897.5" x2="60" y2="897.5" stroke="#999999"/><line x1="53" y1="922.5" x2="60" y2="922.5" stroke="#999999"/><line x1="53" y1="947.5" x2="60" y2="947.5" stroke="#999999"/><line x1="53" y1="972.5" x2="60" y2="972.5" stroke="#999999"/><line x1="53" y1="998.5" x2="60" y2="998.5" stroke="#999999"/><line x1="53" y1="1023.5" x2="60" y2="1023.5" stroke="#999999"/></g>
<g shape-rendering="crispEdges"><line x1="60.5" y1="1023" x2="60.5" y2="1031" stroke="#999999"/><line x1="242.5" y1="1023" x2="242.5" y2="1031" stroke="#999999"/><line x1="425.5" y1="1023" x2="425.5" y2="1031" stroke="#999999"/><line x1="607.5" y1="1023" x2="607.5" y2="1031" stroke="#999999"/><line x1="790.5" y1="1023" x2="790.5" y2="1031" stroke="#999999"/><line x1="972.5" y1="1023" x2="972.5" y2="1031" stroke="#999999"/><line x1="1154.5" y1="1023" x2="1154.5" y2="1031" stroke="#999999"/><line x1="1337.5" y1="1023" x2="1337.5" y2="1031" stroke="#999999"/><line x1="1519.5" y1="1023" x2="1519.5" y2="1031" stroke="#999999"/><line x1="1702.5" y1="1023" x2="1702.5" y2="1031" stroke="#999999"/></g>
<g font-family="Liberation Sans" font-size="14" fill="#bcbcbc" stroke="#bcbcbc" stroke-width="0.3"><text x="53" y="157.6" text-anchor="end">30V</text><text x="53" y="185.6" text-anchor="end">24V</text><text x="53" y="212.6" text-anchor="end">18V</text><text x="53" y="240.6" text-anchor="end">12V</text><text x="53" y="267.6" text-anchor="end">6V</text><text x="53" y="295.6" text-anchor="end">0V</text><text x="53" y="322.6" text-anchor="end">-6V</text><text x="53" y="349.6" text-anchor="end">-12V</text><text x="53" y="377.6" text-anchor="end">-18V</text><text x="53" y="404.6" text-anchor="end">-24V</text><text x="53" y="432.6" text-anchor="end">-30V</text><text x="53" y="453.6" text-anchor="end">70mV</text><text x="53" y="473.6" text-anchor="end">60mV</text><text x="53" y="492.6" text-anchor="end">50mV</text><text x="53" y="512.6" text-anchor="end">40mV</text><text x="53" y="532.6" text-anchor="end">30mV</text><text x="53" y="551.6" text-anchor="end">20mV</text><text x="53" y="571.6" text-anchor="end">10mV</text><text x="53" y="591.6" text-anchor="end">0mV</text><text x="53" y="610.6" text-anchor="end">-10mV</text><text x="53" y="630.6" text-anchor="end">-20mV</text><text x="53" y="649.6" text-anchor="end">-30mV</text><text x="53" y="669.6" text-anchor="end">-40mV</text><text x="53" y="689.6" text-anchor="end">-50mV</text><text x="53" y="708.6" text-anchor="end">-60mV</text><text x="53" y="728.6" text-anchor="end">-70mV</text><text x="53" y="749.6" text-anchor="end">9.5mV</text><text x="53" y="774.6" text-anchor="end">9.4mV</text><text x="53" y="800.6" text-anchor="end">9.3mV</text><text x="53" y="825.6" text-anchor="end">9.2mV</text><text x="53" y="850.6" text-anchor="end">9.1mV</text><text x="53" y="875.6" text-anchor="end">9.0mV</text><text x="53" y="901.6" text-anchor="end">8.9mV</text><text x="53" y="926.6" text-anchor="end">8.8mV</text><text x="53" y="951.6" text-anchor="end">8.7mV</text><text x="53" y="976.6" text-anchor="end">8.6mV</text><text x="53" y="1002.6" text-anchor="end">8.5mV</text><text x="53" y="1027.6" text-anchor="end">8.4mV</text><text x="60.5" y="1043.6" text-anchor="middle">0.86ms</text><text x="242.5" y="1043.6" text-anchor="middle">0.88ms</text><text x="425.5" y="1043.6" text-anchor="middle">0.90ms</text><text x="607.5" y="1043.6" text-anchor="middle">0.92ms</text><text x="790.5" y="1043.6" text-anchor="middle">0.94ms</text><text x="972.5" y="1043.6" text-anchor="middle">0.96ms</text><text x="1154.5" y="1043.6" text-anchor="middle">0.98ms</text><text x="1337.5" y="1043.6" text-anchor="middle">1.00ms</text><text x="1519.5" y="1043.6" text-anchor="middle">1.02ms</text><text x="1702.5" y="1043.6" text-anchor="middle">1.04ms</text></g>
<g font-family="Liberation Sans" font-weight="bold" font-size="14"><text x="972.5" y="148.0" text-anchor="middle" fill="#00ff00" textLength="35" lengthAdjust="spacingAndGlyphs">V(out)</text><text x="972.5" y="444.0" text-anchor="middle" fill="#ff4a00" textLength="47" lengthAdjust="spacingAndGlyphs">V(n007)</text><text x="972.5" y="740.0" text-anchor="middle" fill="#00ffff" textLength="47" lengthAdjust="spacingAndGlyphs">V(n004)</text></g>
<g fill="none" stroke-width="1" shape-rendering="crispEdges">
<path d="M60.0 405.9 L62.0 405.7 L64.0 405.5 L66.0 405.1 L68.0 404.7 L70.0 404.2 L72.0 403.6 L74.0 403.0 L76.0 402.2 L78.0 401.4 L80.0 400.4 L82.0 399.4 L84.0 398.4 L86.0 397.2 L88.0 396.0 L90.0 394.7 L92.0 393.3 L94.0 391.8 L96.0 390.3 L98.0 388.6 L100.0 387.0 L102.0 385.2 L104.0 383.4 L106.0 381.5 L108.0 379.5 L110.0 377.5 L112.0 375.4 L114.0 373.2 L116.0 371.0 L118.0 368.8 L120.0 366.4 L122.0 364.0 L124.0 361.6 L126.0 359.1 L128.0 356.6 L130.0 354.0 L132.0 351.3 L134.0 348.6 L136.0 345.9 L138.0 343.1 L140.0 340.3 L142.0 337.5 L144.0 334.6 L146.0 331.7 L148.0 328.7 L150.0 325.8 L152.0 322.8 L154.0 319.7 L156.0 316.7 L158.0 313.6 L160.0 310.5 L162.0 307.4 L164.0 304.3 L166.0 301.2 L168.0 298.0 L170.0 294.9 L172.0 291.8 L174.0 288.6 L176.0 285.5 L178.0 282.3 L180.0 279.2 L182.0 276.0 L184.0 272.9 L186.0 269.8 L188.0 266.7 L190.0 263.6 L192.0 260.6 L194.0 257.5 L196.0 254.5 L198.0 251.5 L200.0 248.5 L202.0 245.6 L204.0 242.7 L206.0 239.8 L208.0 237.0 L210.0 234.2 L212.0 231.4 L214.0 228.7 L216.0 226.0 L218.0 223.4 L220.0 220.8 L222.0 218.3 L224.0 215.8 L226.0 213.4 L228.0 211.0 L230.0 208.7 L232.0 206.4 L234.0 204.2 L236.0 202.1 L238.0 200.0 L240.0 198.0 L242.0 196.0 L244.0 194.2 L246.0 192.4 L248.0 190.6 L250.0 188.9 L252.0 187.3 L254.0 185.8 L256.0 184.4 L258.0 183.0 L260.0 181.7 L262.0 180.5 L264.0 179.4 L266.0 178.3 L268.0 177.3 L270.0 176.4 L272.0 175.6 L274.0 174.9 L276.0 174.2 L278.0 173.7 L280.0 173.2 L282.0 172.8 L284.0 172.4 L286.0 172.2 L288.0 172.1 L290.0 172.0 L292.0 172.0 L294.0 172.1 L296.0 172.3 L298.0 172.6 L300.0 173.0 L302.0 173.4 L304.0 174.0 L306.0 174.6 L308.0 175.3 L310.0 176.1 L312.0 176.9 L314.0 177.9 L316.0 178.9 L318.0 180.1 L320.0 181.3 L322.0 182.5 L324.0 183.9 L326.0 185.3 L328.0 186.8 L330.0 188.4 L332.0 190.1 L334.0 191.8 L336.0 193.6 L338.0 195.5 L340.0 197.4 L342.0 199.4 L344.0 201.5 L346.0 203.7 L348.0 205.9 L350.0 208.1 L352.0 210.5 L354.0 212.9 L356.0 215.3 L358.0 217.8 L360.0 220.4 L362.0 223.0 L364.0 225.6 L366.0 228.3 L368.0 231.1 L370.0 233.9 L372.0 236.7 L374.0 239.6 L376.0 242.5 L378.0 245.4 L380.0 248.4 L382.0 251.4 L384.0 254.5 L386.0 257.5 L388.0 260.6 L390.0 263.7 L392.0 266.9 L394.0 270.0 L396.0 273.2 L398.0 276.4 L400.0 279.6 L402.0 282.8 L404.0 286.0 L406.0 289.2 L408.0 292.4 L410.0 295.6 L412.0 298.8 L414.0 302.0 L416.0 305.2 L418.0 308.4 L420.0 311.6 L422.0 314.8 L424.0 317.9 L426.0 321.0 L428.0 324.2 L430.0 327.2 L432.0 330.3 L434.0 333.3 L436.0 336.3 L438.0 339.3 L440.0 342.2 L442.0 345.1 L444.0 348.0 L446.0 350.8 L448.0 353.6 L450.0 356.4 L452.0 359.0 L454.0 361.7 L456.0 364.3 L458.0 366.8 L460.0 369.3 L462.0 371.7 L464.0 374.1 L466.0 376.4 L468.0 378.7 L470.0 380.9 L472.0 383.0 L474.0 385.1 L476.0 387.1 L478.0 389.0 L480.0 390.8 L482.0 392.6 L484.0 394.3 L486.0 396.0 L488.0 397.6 L490.0 399.0 L492.0 400.5 L494.0 401.8 L496.0 403.1 L498.0 404.2 L500.0 405.3 L502.0 406.3 L504.0 407.3 L506.0 408.1 L508.0 408.9 L510.0 409.6 L512.0 410.2 L514.0 410.7 L516.0 411.1 L518.0 411.5 L520.0 411.7 L522.0 411.9 L524.0 412.0 L526.0 412.0 L528.0 411.9 L530.0 411.7 L532.0 411.5 L534.0 411.1 L536.0 410.6 L538.0 410.1 L540.0 409.5 L542.0 408.8 L544.0 408.0 L546.0 407.1 L548.0 406.1 L550.0 405.1 L552.0 403.9 L554.0 402.7 L556.0 401.4 L558.0 400.0 L560.0 398.6 L562.0 397.0 L564.0 395.4 L566.0 393.7 L568.0 391.9 L570.0 390.0 L572.0 388.1 L574.0 386.1 L576.0 384.0 L578.0 381.9 L580.0 379.7 L582.0 377.4 L584.0 375.1 L586.0 372.7 L588.0 370.2 L590.0 367.7 L592.0 365.1 L594.0 362.5 L596.0 359.8 L598.0 357.1 L600.0 354.3 L602.0 351.5 L604.0 348.6 L606.0 345.7 L608.0 342.7 L610.0 339.7 L612.0 336.7 L614.0 333.6 L616.0 330.5 L618.0 327.4 L620.0 324.2 L622.0 321.0 L624.0 317.8 L626.0 314.6 L628.0 311.3 L630.0 308.0 L632.0 304.8 L634.0 301.5 L636.0 298.2 L638.0 294.9 L640.0 291.6 L642.0 288.3 L644.0 284.9 L646.0 281.6 L648.0 278.3 L650.0 275.1 L652.0 271.8 L654.0 268.5 L656.0 265.2 L658.0 262.0 L660.0 258.8 L662.0 255.6 L664.0 252.4 L666.0 249.3 L668.0 246.2 L670.0 243.1 L672.0 240.1 L674.0 237.0 L676.0 234.1 L678.0 231.1 L680.0 228.3 L682.0 225.4 L684.0 222.6 L686.0 219.9 L688.0 217.2 L690.0 214.5 L692.0 211.9 L694.0 209.4 L696.0 206.9 L698.0 204.5 L700.0 202.2 L702.0 199.9 L704.0 197.6 L706.0 195.5 L708.0 193.4 L710.0 191.4 L712.0 189.4 L714.0 187.6 L716.0 185.8 L718.0 184.0 L720.0 182.4 L722.0 180.8 L724.0 179.3 L726.0 177.9 L728.0 176.6 L730.0 175.4 L732.0 174.2 L734.0 173.1 L736.0 172.1 L738.0 171.2 L740.0 170.4 L742.0 169.7 L744.0 169.0 L746.0 168.5 L748.0 168.0 L750.0 167.6 L752.0 167.3 L754.0 167.1 L756.0 167.0 L758.0 167.0 L760.0 167.1 L762.0 167.2 L764.0 167.5 L766.0 167.8 L768.0 168.2 L770.0 168.7 L772.0 169.3 L774.0 170.0 L776.0 170.8 L778.0 171.7 L780.0 172.6 L782.0 173.6 L784.0 174.8 L786.0 176.0 L788.0 177.2 L790.0 178.6 L792.0 180.1 L794.0 181.6 L796.0 183.2 L798.0 184.9 L800.0 186.6 L802.0 188.5 L804.0 190.4 L806.0 192.4 L808.0 194.4 L810.0 196.5 L812.0 198.7 L814.0 201.0 L816.0 203.3 L818.0 205.7 L820.0 208.2 L822.0 210.7 L824.0 213.2 L826.0 215.8 L828.0 218.5 L830.0 221.3 L832.0 224.0 L834.0 226.9 L836.0 229.7 L838.0 232.7 L840.0 235.6 L842.0 238.6 L844.0 241.6 L846.0 244.7 L848.0 247.8 L850.0 251.0 L852.0 254.1 L854.0 257.3 L856.0 260.6 L858.0 263.8 L860.0 267.1 L862.0 270.3 L864.0 273.6 L866.0 276.9 L868.0 280.3 L870.0 283.6 L872.0 286.9 L874.0 290.2 L876.0 293.6 L878.0 296.9 L880.0 300.2 L882.0 303.6 L884.0 306.9 L886.0 310.2 L888.0 313.5 L890.0 316.8 L892.0 320.0 L894.0 323.3 L896.0 326.5 L898.0 329.7 L900.0 332.8 L902.0 335.9 L904.0 339.0 L906.0 342.1 L908.0 345.1 L910.0 348.1 L912.0 351.1 L914.0 354.0 L916.0 356.9 L918.0 359.7 L920.0 362.4 L922.0 365.2 L924.0 367.8 L926.0 370.4 L928.0 373.0 L930.0 375.5 L932.0 377.9 L934.0 380.3 L936.0 382.6 L938.0 384.8 L940.0 387.0 L942.0 389.1 L944.0 391.1 L946.0 393.1 L948.0 395.0 L950.0 396.8 L952.0 398.5 L954.0 400.2 L956.0 401.8 L958.0 403.3 L960.0 404.7 L962.0 406.1 L964.0 407.3 L966.0 408.5 L968.0 409.6 L970.0 410.6 L972.0 411.6 L974.0 412.4 L976.0 413.2 L978.0 413.8 L980.0 414.4 L982.0 414.9 L984.0 415.3 L986.0 415.6 L988.0 415.8 L990.0 416.0 L992.0 416.0 L994.0 416.0 L996.0 415.8 L998.0 415.6 L1000.0 415.3 L1002.0 414.9 L1004.0 414.4 L1006.0 413.8 L1008.0 413.1 L1010.0 412.3 L1012.0 411.5 L1014.0 410.5 L1016.0 409.5 L1018.0 408.4 L1020.0 407.2 L1022.0 405.9 L1024.0 404.5 L1026.0 403.1 L1028.0 401.6 L1030.0 400.0 L1032.0 398.3 L1034.0 396.5 L1036.0 394.6 L1038.0 392.7 L1040.0 390.7 L1042.0 388.7 L1044.0 386.5 L1046.0 384.3 L1048.0 382.0 L1050.0 379.7 L1052.0 377.3 L1054.0 374.8 L1056.0 372.3 L1058.0 369.7 L1060.0 367.0 L1062.0 364.3 L1064.0 361.6 L1066.0 358.8 L1068.0 355.9 L1070.0 353.0 L1072.0 350.0 L1074.0 347.1 L1076.0 344.0 L1078.0 340.9 L1080.0 337.8 L1082.0 334.7 L1084.0 331.5 L1086.0 328.3 L1088.0 325.1 L1090.0 321.8 L1092.0 318.5 L1094.0 315.2 L1096.0 311.9 L1098.0 308.5 L1100.0 305.2 L1102.0 301.8 L1104.0 298.5 L1106.0 295.1 L1108.0 291.7 L1110.0 288.3 L1112.0 284.9 L1114.0 281.5 L1116.0 278.2 L1118.0 274.8 L1120.0 271.5 L1122.0 268.1 L1124.0 264.8 L1126.0 261.5 L1128.0 258.2 L1130.0 254.9 L1132.0 251.7 L1134.0 248.5 L1136.0 245.3 L1138.0 242.2 L1140.0 239.1 L1142.0 236.0 L1144.0 232.9 L1146.0 230.0 L1148.0 227.0 L1150.0 224.1 L1152.0 221.2 L1154.0 218.4 L1156.0 215.7 L1158.0 213.0 L1160.0 210.3 L1162.0 207.7 L1164.0 205.2 L1166.0 202.7 L1168.0 200.3 L1170.0 198.0 L1172.0 195.7 L1174.0 193.5 L1176.0 191.3 L1178.0 189.3 L1180.0 187.3 L1182.0 185.4 L1184.0 183.5 L1186.0 181.7 L1188.0 180.0 L1190.0 178.4 L1192.0 176.9 L1194.0 175.5 L1196.0 174.1 L1198.0 172.8 L1200.0 171.6 L1202.0 170.5 L1204.0 169.5 L1206.0 168.5 L1208.0 167.7 L1210.0 166.9 L1212.0 166.2 L1214.0 165.6 L1216.0 165.1 L1218.0 164.7 L1220.0 164.4 L1222.0 164.2 L1224.0 164.0 L1226.0 164.0 L1228.0 164.0 L1230.0 164.2 L1232.0 164.4 L1234.0 164.7 L1236.0 165.1 L1238.0 165.6 L1240.0 166.2 L1242.0 166.9 L1244.0 167.7 L1246.0 168.6 L1248.0 169.5 L1250.0 170.5 L1252.0 171.7 L1254.0 172.9 L1256.0 174.2 L1258.0 175.5 L1260.0 177.0 L1262.0 178.6 L1264.0 180.2 L1266.0 181.9 L1268.0 183.7 L1270.0 185.5 L1272.0 187.5 L1274.0 189.5 L1276.0 191.6 L1278.0 193.7 L1280.0 195.9 L1282.0 198.2 L1284.0 200.6 L1286.0 203.0 L1288.0 205.5 L1290.0 208.1 L1292.0 210.7 L1294.0 213.4 L1296.0 216.1 L1298.0 218.9 L1300.0 221.7 L1302.0 224.6 L1304.0 227.5 L1306.0 230.5 L1308.0 233.5 L1310.0 236.5 L1312.0 239.6 L1314.0 242.8 L1316.0 245.9 L1318.0 249.2 L1320.0 252.4 L1322.0 255.6 L1324.0 258.9 L1326.0 262.2 L1328.0 265.6 L1330.0 268.9 L1332.0 272.3 L1334.0 275.6 L1336.0 279.0 L1338.0 282.4 L1340.0 285.8 L1342.0 289.2 L1344.0 292.6 L1346.0 296.0 L1348.0 299.4 L1350.0 302.8 L1352.0 306.2 L1354.0 309.6 L1356.0 312.9 L1358.0 316.3 L1360.0 319.6 L1362.0 322.9 L1364.0 326.2 L1366.0 329.4 L1368.0 332.7 L1370.0 335.8 L1372.0 339.0 L1374.0 342.1 L1376.0 345.2 L1378.0 348.3 L1380.0 351.3 L1382.0 354.2 L1384.0 357.2 L1386.0 360.0 L1388.0 362.8 L1390.0 365.6 L1392.0 368.3 L1394.0 371.0 L1396.0 373.6 L1398.0 376.1 L1400.0 378.6 L1402.0 381.0 L1404.0 383.3 L1406.0 385.6 L1408.0 387.8 L1410.0 390.0 L1412.0 392.0 L1414.0 394.0 L1416.0 395.9 L1418.0 397.8 L1420.0 399.6 L1422.0 401.2 L1424.0 402.8 L1426.0 404.4 L1428.0 405.8 L1430.0 407.2 L1432.0 408.4 L1434.0 409.6 L1436.0 410.7 L1438.0 411.7 L1440.0 412.7 L1442.0 413.5 L1444.0 414.3 L1446.0 414.9 L1448.0 415.5 L1450.0 416.0 L1452.0 416.4 L1454.0 416.7 L1456.0 416.9 L1458.0 417.0 L1460.0 417.0 L1462.0 416.9 L1464.0 416.8 L1466.0 416.5 L1468.0 416.2 L1470.0 415.7 L1472.0 415.2 L1474.0 414.6 L1476.0 413.9 L1478.0 413.1 L1480.0 412.2 L1482.0 411.3 L1484.0 410.2 L1486.0 409.1 L1488.0 407.8 L1490.0 406.5 L1492.0 405.1 L1494.0 403.7 L1496.0 402.1 L1498.0 400.5 L1500.0 398.8 L1502.0 397.0 L1504.0 395.1 L1506.0 393.1 L1508.0 391.1 L1510.0 389.0 L1512.0 386.9 L1514.0 384.6 L1516.0 382.3 L1518.0 379.9 L1520.0 377.5 L1522.0 375.0 L1524.0 372.5 L1526.0 369.8 L1528.0 367.2 L1530.0 364.4 L1532.0 361.7 L1534.0 358.8 L1536.0 355.9 L1538.0 353.0 L1540.0 350.0 L1542.0 347.0 L1544.0 344.0 L1546.0 340.9 L1548.0 337.7 L1550.0 334.6 L1552.0 331.4 L1554.0 328.2 L1556.0 324.9 L1558.0 321.6 L1560.0 318.3 L1562.0 315.0 L1564.0 311.7 L1566.0 308.3 L1568.0 305.0 L1570.0 301.6 L1572.0 298.2 L1574.0 294.8 L1576.0 291.4 L1578.0 288.0 L1580.0 284.6 L1582.0 281.3 L1584.0 277.9 L1586.0 274.5 L1588.0 271.2 L1590.0 267.8 L1592.0 264.5 L1594.0 261.2 L1596.0 257.9 L1598.0 254.7 L1600.0 251.4 L1602.0 248.2 L1604.0 245.0 L1606.0 241.9 L1608.0 238.8 L1610.0 235.7 L1612.0 232.7 L1614.0 229.7 L1616.0 226.8 L1618.0 223.9 L1620.0 221.0 L1622.0 218.2 L1624.0 215.5 L1626.0 212.8 L1628.0 210.2 L1630.0 207.6 L1632.0 205.1 L1634.0 202.7 L1636.0 200.3 L1638.0 198.0 L1640.0 195.7 L1642.0 193.5 L1644.0 191.4 L1646.0 189.4 L1648.0 187.4 L1650.0 185.5 L1652.0 183.7 L1654.0 182.0 L1656.0 180.3 L1658.0 178.7 L1660.0 177.2 L1662.0 175.8 L1664.0 174.5 L1666.0 173.2 L1668.0 172.1 L1670.0 171.0 L1672.0 170.0 L1674.0 169.1 L1676.0 168.3 L1678.0 167.6 L1680.0 166.9 L1682.0 166.4 L1684.0 165.9 L1686.0 165.6 L1688.0 165.3 L1690.0 165.1 L1692.0 165.0 L1694.0 165.0 L1696.0 165.1 L1698.0 165.3 L1700.0 165.6 L1702.0 165.9 L1704.0 166.4 L1706.0 166.9 L1708.0 167.5 L1710.0 168.3 L1712.0 169.1 L1714.0 170.0 L1716.0 170.9 L1718.0 172.0 L1720.0 173.2 L1722.0 174.4 L1724.0 175.7 L1726.0 177.1 L1728.0 178.6 L1730.0 180.2 L1732.0 181.8 L1734.0 183.6 L1736.0 185.4 L1738.0 187.3 L1740.0 189.2 L1742.0 191.2 L1744.0 193.3 L1746.0 195.5 L1748.0 197.8 L1750.0 200.1 L1752.0 202.4 L1754.0 204.9 L1756.0 207.4 L1758.0 209.9 L1760.0 212.5 L1762.0 215.2 L1764.0 217.9 L1766.0 220.7 L1768.0 223.5 L1770.0 226.4 L1772.0 229.3 L1774.0 232.3 L1776.0 235.3 L1778.0 238.4 L1780.0 241.5 L1782.0 244.6 L1784.0 247.7 L1786.0 250.9 L1788.0 254.1 L1790.0 257.4 L1792.0 260.7 L1794.0 263.9 L1796.0 267.3 L1798.0 270.6 L1800.0 273.9 L1802.0 277.3 L1804.0 280.6 L1806.0 284.0 L1808.0 287.4 L1810.0 290.8 L1812.0 294.1 L1814.0 297.5 L1816.0 300.9 L1818.0 304.2 L1820.0 307.6 L1822.0 310.9 L1824.0 314.2 L1826.0 317.6 L1828.0 320.8 L1830.0 324.1 L1832.0 327.4 L1834.0 330.6 L1836.0 333.8 L1838.0 336.9 L1840.0 340.0 L1842.0 343.1 L1844.0 346.2 L1846.0 349.2 L1848.0 352.2 L1850.0 355.1 L1852.0 358.0 L1854.0 360.8 L1856.0 363.6 L1858.0 366.3 L1860.0 369.0 L1862.0 371.6 L1864.0 374.1 L1866.0 376.6 L1868.0 379.1 L1870.0 381.4 L1872.0 383.7 L1874.0 386.0 L1876.0 388.2 L1878.0 390.3 L1880.0 392.3 L1882.0 394.2 L1884.0 396.1" stroke="#00ff00"/>
<path d="M60.0 583.6C62.4 581.6 68.6 577.7 74.5 571.7C80.4 565.7 90.1 554.2 95.6 547.4C101.1 540.6 104.0 536.0 107.5 530.8C111.0 525.6 113.0 522.7 116.8 516.3C120.5 509.9 126.3 498.7 130.0 492.5C133.7 486.3 135.7 483.2 139.2 479.3C142.7 475.4 146.7 471.4 151.1 468.8C155.5 466.2 160.1 464.4 165.6 463.5C171.1 462.6 178.7 462.4 184.0 463.5C189.3 464.6 192.9 466.2 197.3 470.1C201.7 474.1 206.1 480.2 210.5 487.2C214.9 494.2 219.7 505.2 223.7 512.3C227.7 519.3 230.8 524.2 234.3 529.5C237.8 534.8 240.0 538.3 244.8 544.0C249.6 549.7 257.1 557.8 263.3 563.8C269.5 569.8 275.7 574.6 281.8 579.7C287.9 584.8 295.2 590.0 300.0 594.2C304.8 598.4 306.4 600.8 310.6 604.7C314.8 608.7 321.2 613.9 325.1 617.9C329.1 621.9 331.0 624.1 334.3 628.5C337.6 632.9 341.4 638.8 344.9 644.3C348.4 649.8 351.9 655.1 355.4 661.5C358.9 667.9 362.5 676.4 366.0 682.6C369.5 688.8 373.1 694.1 376.6 698.5C380.1 702.9 383.2 706.4 387.1 709.0C391.1 711.6 395.5 713.4 400.3 714.3C405.1 715.2 410.5 715.8 416.2 714.3C421.9 712.8 429.4 709.7 434.7 705.1C440.0 700.5 443.9 693.0 447.9 686.6C451.8 680.2 454.7 673.6 458.4 666.8C462.1 660.0 466.1 652.5 470.3 645.7C474.5 638.9 478.4 632.3 483.5 625.9C488.6 619.5 494.8 613.6 500.7 607.4C506.6 601.2 512.6 594.6 519.1 588.9C525.6 583.2 533.0 579.6 540.0 573.0C547.0 566.4 555.4 556.5 561.1 549.3C566.8 542.0 569.9 536.3 574.3 529.5C578.7 522.7 583.8 515.0 587.5 508.4C591.2 501.8 593.5 496.1 596.8 489.9C600.1 483.7 604.0 475.9 607.3 471.4C610.6 466.9 612.9 465.4 616.6 463.0C620.4 460.6 624.5 457.9 629.8 456.9C635.1 455.9 642.5 455.6 648.2 456.9C653.9 458.2 659.2 460.2 664.1 464.8C669.0 469.4 673.1 477.1 677.3 484.6C681.5 492.1 685.2 502.2 689.2 509.7C693.2 517.2 696.9 523.4 701.1 529.5C705.3 535.6 708.8 540.4 714.3 546.6C719.8 552.8 726.6 559.9 734.1 566.5C741.6 573.1 751.5 579.9 759.1 586.3C766.8 592.7 774.8 600.1 780.0 604.7C785.2 609.3 787.1 610.2 790.6 614.0C794.1 617.8 797.6 622.8 801.1 627.2C804.6 631.6 808.2 635.1 811.7 640.4C815.2 645.7 818.7 652.1 822.2 658.9C825.7 665.7 829.3 674.5 832.8 681.3C836.3 688.1 839.9 694.5 843.4 699.8C846.9 705.1 849.9 709.7 853.9 713.0C857.9 716.3 862.2 718.5 867.1 719.6C872.0 720.7 878.1 720.5 883.0 719.6C887.9 718.7 892.2 717.2 896.2 714.3C900.2 711.4 903.4 707.2 906.7 702.4C910.0 697.6 912.7 691.4 916.0 685.3C919.3 679.1 923.0 672.1 926.5 665.5C930.0 658.9 933.4 652.1 937.1 645.7C940.9 639.3 943.9 633.6 949.0 627.2C954.1 620.8 960.9 613.8 967.5 607.4C974.1 601.0 979.9 596.8 988.6 588.9C997.4 581.0 1013.5 566.6 1020.0 560.2C1026.5 553.8 1024.6 554.6 1027.9 550.6C1031.2 546.6 1035.8 541.8 1039.8 536.1C1043.8 530.4 1048.0 523.3 1051.7 516.3C1055.4 509.2 1058.7 501.1 1062.2 493.8C1065.7 486.5 1069.3 478.2 1072.8 472.7C1076.3 467.2 1079.4 463.9 1083.4 460.8C1087.4 457.7 1091.8 455.5 1096.6 454.2C1101.4 452.9 1107.6 452.4 1112.4 452.9C1117.2 453.3 1121.6 454.7 1125.6 456.9C1129.6 459.1 1132.7 461.5 1136.2 466.1C1139.7 470.7 1143.2 477.8 1146.7 484.6C1150.2 491.4 1153.8 500.0 1157.3 507.0C1160.8 514.0 1164.4 521.1 1167.9 526.8C1171.4 532.5 1174.5 536.3 1178.4 541.4C1182.4 546.5 1186.8 552.2 1191.6 557.2C1196.4 562.2 1201.3 566.6 1207.5 571.7C1213.7 576.8 1222.4 582.8 1228.6 587.6C1234.8 592.5 1239.2 595.8 1244.4 600.8C1249.6 605.8 1255.9 613.5 1260.0 617.9C1264.1 622.3 1265.9 622.8 1269.2 627.2C1272.5 631.6 1276.3 638.4 1279.8 644.3C1283.3 650.2 1286.9 656.2 1290.4 662.8C1293.9 669.4 1297.6 677.7 1300.9 683.9C1304.2 690.1 1306.7 694.5 1310.2 699.8C1313.7 705.1 1317.6 712.1 1322.0 715.6C1326.4 719.1 1332.0 720.0 1336.6 720.9C1341.2 721.8 1345.0 722.2 1349.8 720.9C1354.6 719.6 1361.2 716.3 1365.6 713.0C1370.0 709.7 1373.3 705.5 1376.2 701.1C1379.1 696.7 1380.0 692.3 1382.8 686.6C1385.6 680.9 1389.8 673.4 1393.3 666.8C1396.8 660.2 1400.2 653.2 1403.9 647.0C1407.7 640.8 1410.7 636.4 1415.8 629.8C1420.9 623.2 1427.5 614.2 1434.3 607.4C1441.1 600.6 1449.0 595.5 1456.7 588.9C1464.4 582.3 1473.3 575.1 1480.5 567.8C1487.7 560.5 1495.4 550.7 1500.0 545.0C1504.6 539.3 1505.0 537.8 1507.9 533.4C1510.8 529.0 1513.9 524.6 1517.2 518.9C1520.5 513.2 1524.2 505.9 1527.7 499.1C1531.2 492.3 1534.3 484.4 1538.3 478.0C1542.3 471.6 1546.9 464.9 1551.5 460.8C1556.1 456.7 1561.0 454.7 1566.0 453.4C1571.0 452.1 1577.0 452.1 1581.8 452.9C1586.6 453.7 1591.0 455.5 1595.0 458.2C1599.0 460.9 1602.1 463.7 1605.6 468.8C1609.1 473.9 1612.7 481.6 1616.2 488.6C1619.7 495.6 1623.2 504.2 1626.7 511.0C1630.2 517.8 1633.3 523.6 1637.3 529.5C1641.3 535.4 1645.2 540.4 1650.5 546.6C1655.8 552.8 1662.4 560.3 1669.0 566.5C1675.6 572.7 1683.1 577.9 1690.1 583.6C1697.1 589.3 1705.0 595.5 1711.2 600.8C1717.4 606.1 1721.5 609.1 1727.1 615.3C1732.7 621.4 1740.0 631.3 1744.7 637.7C1749.4 644.1 1751.7 647.4 1755.2 653.6C1758.7 659.8 1762.0 667.2 1765.8 674.7C1769.5 682.2 1774.0 692.1 1777.7 698.5C1781.4 704.9 1784.2 709.5 1788.2 713.0C1792.2 716.5 1796.7 718.5 1801.5 719.6C1806.3 720.7 1812.0 720.9 1817.3 719.6C1822.6 718.3 1828.5 715.5 1833.1 711.7C1837.7 708.0 1841.2 702.8 1845.0 697.1C1848.8 691.4 1852.3 683.7 1855.6 677.3C1858.9 670.9 1861.7 664.4 1864.8 658.9C1867.9 653.4 1870.9 649.0 1874.1 644.3C1877.3 639.6 1882.3 632.9 1884.0 630.6" stroke="#ff4a00"/>
<path d="M60.0 940.0C62.2 940.2 69.1 940.3 73.3 941.3C77.5 942.3 81.5 943.7 85.3 945.9C89.1 948.1 92.2 951.2 96.0 954.7C99.8 958.2 104.5 962.9 108.0 966.7C111.5 970.5 114.0 974.4 117.3 977.3C120.6 980.2 124.9 983.5 128.0 984.0C131.1 984.5 133.1 983.3 136.0 980.0C138.9 976.7 142.4 970.0 145.3 964.0C148.2 958.0 150.6 950.7 153.3 944.0C156.0 937.3 158.2 929.8 161.3 924.0C164.4 918.2 168.7 913.5 172.0 909.3C175.3 905.1 178.2 902.9 181.3 898.7C184.4 894.5 187.8 890.0 190.7 884.0C193.6 878.0 196.3 869.8 198.7 862.7C201.1 855.6 202.9 848.9 205.3 841.3C207.7 833.7 210.4 823.3 213.3 817.3C216.2 811.3 219.8 807.4 222.7 805.3C225.6 803.2 227.6 803.6 230.7 804.5C233.8 805.4 237.8 807.9 241.3 810.7C244.9 813.5 248.0 817.5 252.0 821.3C256.0 825.1 260.4 830.0 265.3 833.3C270.2 836.6 275.5 839.4 281.3 841.3C287.1 843.2 294.7 844.7 300.0 844.5C305.3 844.3 308.9 841.9 313.3 840.0C317.8 838.1 321.8 837.1 326.7 833.3C331.6 829.5 337.8 822.8 342.7 817.3C347.6 811.8 351.8 804.7 356.0 800.0C360.2 795.3 364.7 790.2 368.0 789.3C371.3 788.4 372.9 790.0 376.0 794.7C379.1 799.4 383.1 808.4 386.7 817.3C390.2 826.2 393.8 839.1 397.3 848.0C400.9 856.9 404.4 864.5 408.0 870.7C411.6 876.9 415.4 880.4 418.7 885.3C422.0 890.2 424.9 894.0 428.0 900.0C431.1 906.0 434.4 912.8 437.3 921.3C440.2 929.8 442.6 942.7 445.3 950.7C448.0 958.7 450.2 964.5 453.3 969.3C456.4 974.0 460.2 978.5 464.0 979.2C467.8 979.9 471.3 977.4 476.0 973.3C480.7 969.2 486.2 959.8 492.0 954.7C497.8 949.6 504.5 945.2 510.7 942.7C516.9 940.2 524.4 939.9 529.3 939.5C534.2 939.1 536.4 939.5 540.0 940.2C543.6 941.0 546.9 941.6 550.7 944.0C554.5 946.4 558.7 950.7 562.7 954.7C566.7 958.7 570.9 963.1 574.7 968.0C578.5 972.9 581.5 979.9 585.3 984.0C589.1 988.1 594.0 991.9 597.3 992.8C600.6 993.7 602.4 992.8 605.3 989.3C608.2 985.8 611.4 980.4 614.7 972.0C618.0 963.6 621.8 948.0 625.3 938.7C628.8 929.4 632.4 922.0 636.0 916.0C639.6 910.0 643.4 907.6 646.7 902.7C650.0 897.8 653.1 893.2 656.0 886.7C658.9 880.2 661.8 871.6 664.0 864.0C666.2 856.4 667.3 848.6 669.3 841.3C671.3 834.0 673.8 826.2 676.0 820.0C678.2 813.8 680.0 807.9 682.7 804.0C685.4 800.1 689.1 797.2 692.0 796.5C694.9 795.8 696.0 796.5 700.0 800.0C704.0 803.5 711.1 812.0 716.0 817.3C720.9 822.6 723.5 827.8 729.3 832.0C735.1 836.2 744.5 840.7 750.7 842.7C756.9 844.7 761.8 844.2 766.7 844.0C771.6 843.8 776.0 842.9 780.0 841.6C784.0 840.3 785.8 839.8 790.7 836.0C795.6 832.2 804.0 825.2 809.3 818.7C814.6 812.2 818.7 802.9 822.7 797.3C826.7 791.6 830.4 787.2 833.3 784.8C836.2 782.4 837.5 781.5 840.0 782.7C842.5 783.9 845.5 787.3 848.0 792.0C850.5 796.7 851.8 801.8 854.7 810.7C857.6 819.6 861.8 835.3 865.3 845.3C868.8 855.3 872.0 863.1 876.0 870.7C880.0 878.3 885.8 884.9 889.3 890.7C892.8 896.5 894.6 899.1 897.3 905.3C900.0 911.5 902.8 920.0 905.3 928.0C907.8 936.0 909.5 945.3 912.0 953.3C914.5 961.3 916.9 970.8 920.0 976.0C923.1 981.2 927.4 983.9 930.7 984.8C934.0 985.7 935.8 985.2 940.0 981.3C944.2 977.4 950.7 966.8 956.0 961.3C961.3 955.8 965.3 951.6 972.0 948.0C978.7 944.4 988.0 939.9 996.0 939.5C1004.0 939.1 1014.7 943.7 1020.0 945.6C1025.3 947.5 1024.9 947.9 1028.0 950.7C1031.1 953.6 1034.9 957.6 1038.7 962.7C1042.5 967.8 1047.2 976.2 1050.7 981.3C1054.2 986.4 1057.1 990.5 1060.0 993.3C1062.9 996.1 1065.5 998.3 1068.0 998.1C1070.5 997.9 1072.2 995.9 1074.7 992.0C1077.2 988.1 1079.8 983.2 1082.7 974.7C1085.6 966.2 1088.9 950.6 1092.0 941.3C1095.1 932.0 1097.8 925.4 1101.3 918.7C1104.8 912.0 1109.7 906.6 1113.3 901.3C1116.9 896.0 1119.8 893.1 1122.7 886.7C1125.6 880.3 1128.5 870.0 1130.7 862.7C1132.9 855.4 1133.8 850.7 1136.0 842.7C1138.2 834.7 1141.1 822.7 1144.0 814.7C1146.9 806.7 1150.4 798.3 1153.3 794.7C1156.2 791.1 1157.7 791.3 1161.3 793.3C1164.9 795.3 1170.2 801.8 1174.7 806.7C1179.2 811.6 1183.1 817.8 1188.0 822.7C1192.9 827.6 1198.2 832.5 1204.0 836.0C1209.8 839.5 1216.9 842.2 1222.7 843.5C1228.5 844.8 1232.5 845.5 1238.7 844.0C1244.9 842.5 1253.8 838.7 1260.0 834.7C1266.2 830.7 1271.1 826.2 1276.0 820.0C1280.9 813.8 1285.3 803.3 1289.3 797.3C1293.3 791.3 1296.9 786.8 1300.0 784.0C1303.1 781.2 1305.3 779.6 1308.0 780.5C1310.7 781.4 1313.5 785.2 1316.0 789.3C1318.5 793.4 1320.0 796.8 1322.7 805.3C1325.4 813.8 1329.1 830.0 1332.0 840.0C1334.9 850.0 1336.7 858.0 1340.0 865.3C1343.3 872.6 1348.5 878.4 1352.0 884.0C1355.5 889.6 1358.4 892.7 1361.3 898.7C1364.2 904.7 1366.6 911.6 1369.3 920.0C1372.0 928.4 1374.6 940.6 1377.3 949.3C1380.0 958.0 1382.0 965.8 1385.3 972.0C1388.6 978.2 1393.3 985.6 1397.3 986.7C1401.3 987.8 1405.1 982.7 1409.3 978.7C1413.5 974.7 1417.4 968.0 1422.7 962.7C1428.0 957.4 1434.6 950.6 1441.3 946.7C1448.0 942.8 1455.6 940.0 1462.7 939.5C1469.8 939.0 1477.8 941.4 1484.0 944.0C1490.2 946.6 1495.5 951.2 1500.0 955.4C1504.5 959.6 1507.2 964.3 1510.7 969.3C1514.2 974.3 1518.2 980.8 1521.3 985.3C1524.4 989.8 1526.8 993.9 1529.3 996.0C1531.8 998.1 1533.8 998.8 1536.0 998.1C1538.2 997.4 1540.5 995.7 1542.7 992.0C1544.9 988.3 1546.9 983.3 1549.3 976.0C1551.7 968.7 1554.2 957.1 1557.3 948.0C1560.4 938.9 1564.4 928.2 1568.0 921.3C1571.6 914.4 1575.4 911.6 1578.7 906.7C1582.0 901.8 1585.1 897.8 1588.0 892.0C1590.9 886.2 1593.5 879.5 1596.0 872.0C1598.5 864.5 1600.5 854.9 1602.7 846.7C1604.9 838.5 1606.9 830.5 1609.3 822.7C1611.7 814.9 1614.6 804.9 1617.3 800.0C1620.0 795.1 1622.2 793.8 1625.3 793.3C1628.4 792.8 1632.0 794.2 1636.0 797.3C1640.0 800.4 1644.0 806.0 1649.3 812.0C1654.6 818.0 1661.8 828.2 1668.0 833.3C1674.2 838.4 1680.5 840.9 1686.7 842.7C1692.9 844.5 1699.1 845.1 1705.3 844.0C1711.5 842.9 1717.5 840.0 1724.0 836.0C1730.5 832.0 1738.7 825.5 1744.0 820.0C1749.3 814.5 1752.5 808.0 1756.0 802.7C1759.5 797.4 1762.4 791.4 1765.3 788.0C1768.2 784.6 1770.6 781.9 1773.3 782.1C1776.0 782.3 1778.8 785.6 1781.3 789.3C1783.8 792.9 1785.3 795.8 1788.0 804.0C1790.7 812.2 1794.0 828.2 1797.3 838.7C1800.6 849.2 1803.1 857.2 1808.0 866.7C1812.9 876.2 1821.8 887.3 1826.7 896.0C1831.6 904.7 1834.0 909.6 1837.3 918.7C1840.6 927.8 1843.6 941.4 1846.7 950.7C1849.8 960.0 1852.9 969.2 1856.0 974.7C1859.1 980.2 1862.2 983.1 1865.3 984.0C1868.4 984.9 1871.6 982.2 1874.7 980.0C1877.8 977.8 1882.5 972.2 1884.0 970.7" stroke="#00ffff"/>
</g>
</svg>
<!-- status bar -->
<div class="abs" style="left:0;top:1059px;width:1920px;height:1px;background:#fafafa"></div><div class="abs" style="left:0;top:1060px;width:1920px;height:1px;background:#dedede"></div>
<div class="txt" style="left:2px;top:1066px;letter-spacing:-0.3px">x = 1.0468ms&nbsp;&nbsp;&nbsp;&nbsp;y = 9.168mV</div>
<div class="txt" style="left:1868px;top:1066px">Alternate</div>
</body></html>
